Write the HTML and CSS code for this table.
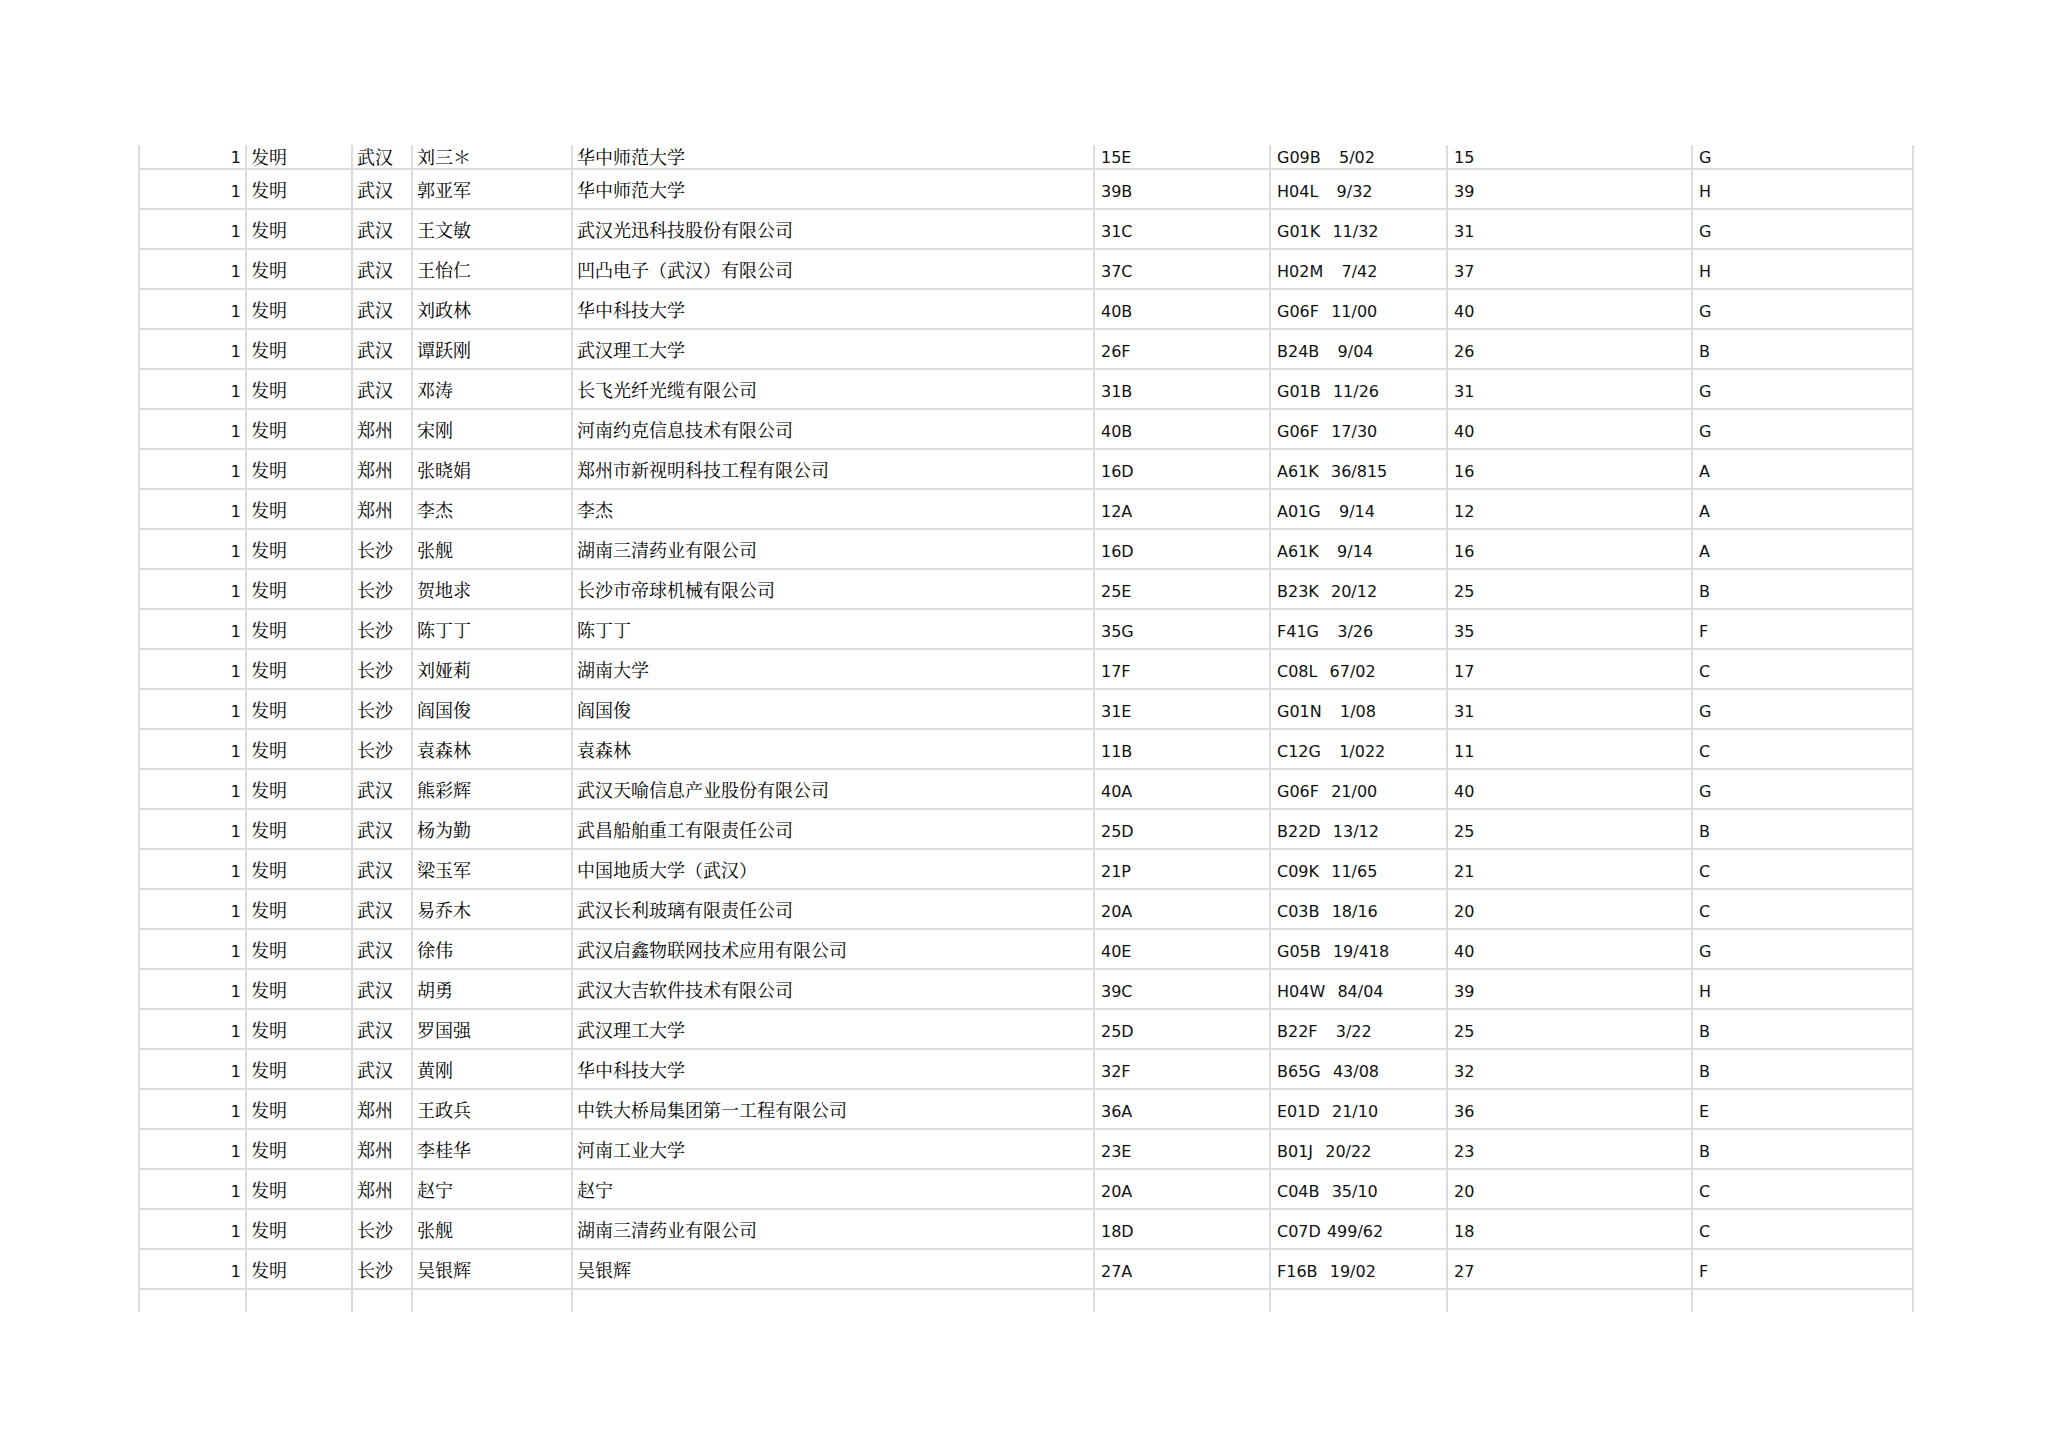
FILE: index.html
```html
<!DOCTYPE html>
<html lang="zh-CN">
<head>
<meta charset="utf-8">
<title>专利列表</title>
<link rel="stylesheet" href="styles.css">
</head>
<body>
<div class="page">
  <div class="sheet">
    <div class="row first"><div class="c num">1</div><div class="c cn">发明</div><div class="c cn">武汉</div><div class="c cn">刘三＊</div><div class="c cn">华中师范大学</div><div class="c">15E</div><div class="c ipc">G09B   5/02</div><div class="c">15</div><div class="c">G</div></div>
    <div class="row"><div class="c num">1</div><div class="c cn">发明</div><div class="c cn">武汉</div><div class="c cn">郭亚军</div><div class="c cn">华中师范大学</div><div class="c">39B</div><div class="c ipc">H04L   9/32</div><div class="c">39</div><div class="c">H</div></div>
    <div class="row"><div class="c num">1</div><div class="c cn">发明</div><div class="c cn">武汉</div><div class="c cn">王文敏</div><div class="c cn">武汉光迅科技股份有限公司</div><div class="c">31C</div><div class="c ipc">G01K  11/32</div><div class="c">31</div><div class="c">G</div></div>
    <div class="row"><div class="c num">1</div><div class="c cn">发明</div><div class="c cn">武汉</div><div class="c cn">王怡仁</div><div class="c cn">凹凸电子（武汉）有限公司</div><div class="c">37C</div><div class="c ipc">H02M   7/42</div><div class="c">37</div><div class="c">H</div></div>
    <div class="row"><div class="c num">1</div><div class="c cn">发明</div><div class="c cn">武汉</div><div class="c cn">刘政林</div><div class="c cn">华中科技大学</div><div class="c">40B</div><div class="c ipc">G06F  11/00</div><div class="c">40</div><div class="c">G</div></div>
    <div class="row"><div class="c num">1</div><div class="c cn">发明</div><div class="c cn">武汉</div><div class="c cn">谭跃刚</div><div class="c cn">武汉理工大学</div><div class="c">26F</div><div class="c ipc">B24B   9/04</div><div class="c">26</div><div class="c">B</div></div>
    <div class="row"><div class="c num">1</div><div class="c cn">发明</div><div class="c cn">武汉</div><div class="c cn">邓涛</div><div class="c cn">长飞光纤光缆有限公司</div><div class="c">31B</div><div class="c ipc">G01B  11/26</div><div class="c">31</div><div class="c">G</div></div>
    <div class="row"><div class="c num">1</div><div class="c cn">发明</div><div class="c cn">郑州</div><div class="c cn">宋刚</div><div class="c cn">河南约克信息技术有限公司</div><div class="c">40B</div><div class="c ipc">G06F  17/30</div><div class="c">40</div><div class="c">G</div></div>
    <div class="row"><div class="c num">1</div><div class="c cn">发明</div><div class="c cn">郑州</div><div class="c cn">张晓娟</div><div class="c cn">郑州市新视明科技工程有限公司</div><div class="c">16D</div><div class="c ipc">A61K  36/815</div><div class="c">16</div><div class="c">A</div></div>
    <div class="row"><div class="c num">1</div><div class="c cn">发明</div><div class="c cn">郑州</div><div class="c cn">李杰</div><div class="c cn">李杰</div><div class="c">12A</div><div class="c ipc">A01G   9/14</div><div class="c">12</div><div class="c">A</div></div>
    <div class="row"><div class="c num">1</div><div class="c cn">发明</div><div class="c cn">长沙</div><div class="c cn">张舰</div><div class="c cn">湖南三清药业有限公司</div><div class="c">16D</div><div class="c ipc">A61K   9/14</div><div class="c">16</div><div class="c">A</div></div>
    <div class="row"><div class="c num">1</div><div class="c cn">发明</div><div class="c cn">长沙</div><div class="c cn">贺地求</div><div class="c cn">长沙市帝球机械有限公司</div><div class="c">25E</div><div class="c ipc">B23K  20/12</div><div class="c">25</div><div class="c">B</div></div>
    <div class="row"><div class="c num">1</div><div class="c cn">发明</div><div class="c cn">长沙</div><div class="c cn">陈丁丁</div><div class="c cn">陈丁丁</div><div class="c">35G</div><div class="c ipc">F41G   3/26</div><div class="c">35</div><div class="c">F</div></div>
    <div class="row"><div class="c num">1</div><div class="c cn">发明</div><div class="c cn">长沙</div><div class="c cn">刘娅莉</div><div class="c cn">湖南大学</div><div class="c">17F</div><div class="c ipc">C08L  67/02</div><div class="c">17</div><div class="c">C</div></div>
    <div class="row"><div class="c num">1</div><div class="c cn">发明</div><div class="c cn">长沙</div><div class="c cn">阎国俊</div><div class="c cn">阎国俊</div><div class="c">31E</div><div class="c ipc">G01N   1/08</div><div class="c">31</div><div class="c">G</div></div>
    <div class="row"><div class="c num">1</div><div class="c cn">发明</div><div class="c cn">长沙</div><div class="c cn">袁森林</div><div class="c cn">袁森林</div><div class="c">11B</div><div class="c ipc">C12G   1/022</div><div class="c">11</div><div class="c">C</div></div>
    <div class="row"><div class="c num">1</div><div class="c cn">发明</div><div class="c cn">武汉</div><div class="c cn">熊彩辉</div><div class="c cn">武汉天喻信息产业股份有限公司</div><div class="c">40A</div><div class="c ipc">G06F  21/00</div><div class="c">40</div><div class="c">G</div></div>
    <div class="row"><div class="c num">1</div><div class="c cn">发明</div><div class="c cn">武汉</div><div class="c cn">杨为勤</div><div class="c cn">武昌船舶重工有限责任公司</div><div class="c">25D</div><div class="c ipc">B22D  13/12</div><div class="c">25</div><div class="c">B</div></div>
    <div class="row"><div class="c num">1</div><div class="c cn">发明</div><div class="c cn">武汉</div><div class="c cn">梁玉军</div><div class="c cn">中国地质大学（武汉）</div><div class="c">21P</div><div class="c ipc">C09K  11/65</div><div class="c">21</div><div class="c">C</div></div>
    <div class="row"><div class="c num">1</div><div class="c cn">发明</div><div class="c cn">武汉</div><div class="c cn">易乔木</div><div class="c cn">武汉长利玻璃有限责任公司</div><div class="c">20A</div><div class="c ipc">C03B  18/16</div><div class="c">20</div><div class="c">C</div></div>
    <div class="row"><div class="c num">1</div><div class="c cn">发明</div><div class="c cn">武汉</div><div class="c cn">徐伟</div><div class="c cn">武汉启鑫物联网技术应用有限公司</div><div class="c">40E</div><div class="c ipc">G05B  19/418</div><div class="c">40</div><div class="c">G</div></div>
    <div class="row"><div class="c num">1</div><div class="c cn">发明</div><div class="c cn">武汉</div><div class="c cn">胡勇</div><div class="c cn">武汉大吉软件技术有限公司</div><div class="c">39C</div><div class="c ipc">H04W  84/04</div><div class="c">39</div><div class="c">H</div></div>
    <div class="row"><div class="c num">1</div><div class="c cn">发明</div><div class="c cn">武汉</div><div class="c cn">罗国强</div><div class="c cn">武汉理工大学</div><div class="c">25D</div><div class="c ipc">B22F   3/22</div><div class="c">25</div><div class="c">B</div></div>
    <div class="row"><div class="c num">1</div><div class="c cn">发明</div><div class="c cn">武汉</div><div class="c cn">黄刚</div><div class="c cn">华中科技大学</div><div class="c">32F</div><div class="c ipc">B65G  43/08</div><div class="c">32</div><div class="c">B</div></div>
    <div class="row"><div class="c num">1</div><div class="c cn">发明</div><div class="c cn">郑州</div><div class="c cn">王政兵</div><div class="c cn">中铁大桥局集团第一工程有限公司</div><div class="c">36A</div><div class="c ipc">E01D  21/10</div><div class="c">36</div><div class="c">E</div></div>
    <div class="row"><div class="c num">1</div><div class="c cn">发明</div><div class="c cn">郑州</div><div class="c cn">李桂华</div><div class="c cn">河南工业大学</div><div class="c">23E</div><div class="c ipc">B01J  20/22</div><div class="c">23</div><div class="c">B</div></div>
    <div class="row"><div class="c num">1</div><div class="c cn">发明</div><div class="c cn">郑州</div><div class="c cn">赵宁</div><div class="c cn">赵宁</div><div class="c">20A</div><div class="c ipc">C04B  35/10</div><div class="c">20</div><div class="c">C</div></div>
    <div class="row"><div class="c num">1</div><div class="c cn">发明</div><div class="c cn">长沙</div><div class="c cn">张舰</div><div class="c cn">湖南三清药业有限公司</div><div class="c">18D</div><div class="c ipc">C07D 499/62</div><div class="c">18</div><div class="c">C</div></div>
    <div class="row"><div class="c num">1</div><div class="c cn">发明</div><div class="c cn">长沙</div><div class="c cn">吴银辉</div><div class="c cn">吴银辉</div><div class="c">27A</div><div class="c ipc">F16B  19/02</div><div class="c">27</div><div class="c">F</div></div>
    <div class="row last"><div class="c num"></div><div class="c"></div><div class="c"></div><div class="c"></div><div class="c"></div><div class="c"></div><div class="c"></div><div class="c"></div><div class="c"></div></div>
  </div>
</div>
</body>
</html>
```

FILE: styles.css
```css
html, body {
  margin: 0;
  padding: 0;
  background: #ffffff;
}

.page {
  padding: 145px 0 0 138px;
}

.sheet {
  width: 1776px;
  box-sizing: border-box;
  border-left: 2px solid #dcdcdc;
  font-family: "DejaVu Sans", "Noto Serif CJK SC", "Noto Sans CJK SC", sans-serif;
  font-size: 16px;
  color: #111111;
}

.row {
  display: grid;
  grid-template-columns: 107px 106px 60px 160px 522px 176px 177px 245px 221px;
  height: 40px;
  box-sizing: border-box;
  border-bottom: 2px solid #dcdcdc;
}

.row.first {
  height: 25px;
}

.row.last {
  height: 22px;
  border-bottom: none;
}

.c {
  display: flex;
  align-items: center;
  box-sizing: border-box;
  border-right: 2px solid #dcdcdc;
  padding: 5px 0 0 6px;
  line-height: 20px;
  white-space: nowrap;
  overflow: hidden;
}

.row.first .c {
  padding-top: 2px;
}

.c.num {
  justify-content: flex-end;
  padding-left: 0;
  padding-right: 4px;
}

.c.cn {
  font-size: 18px;
  padding-top: 4px;
  padding-left: 4px;
  color: #000000;
}

.row.first .c.cn {
  padding-top: 2px;
}

.c.ipc {
  white-space: pre;
  word-spacing: 1px;
}
```
